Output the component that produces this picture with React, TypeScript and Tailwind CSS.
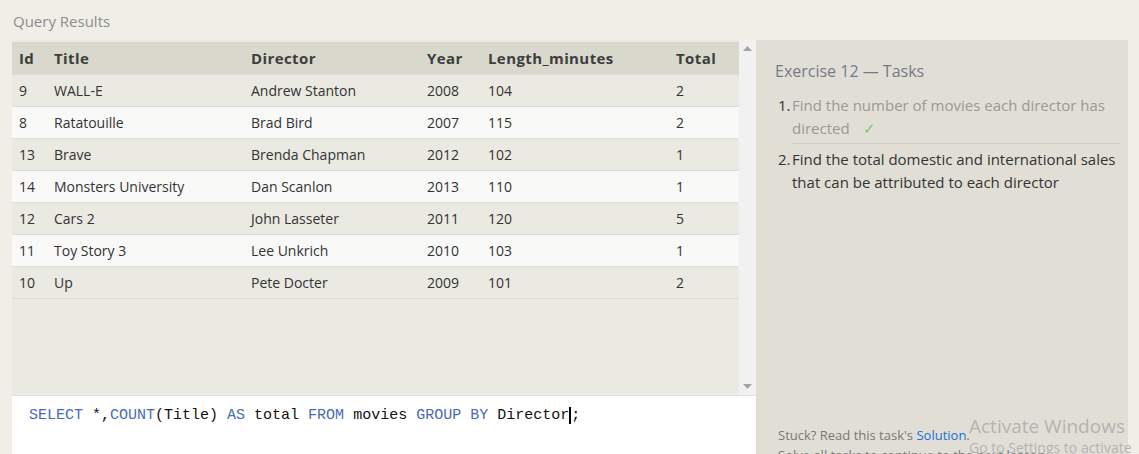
import React from 'react'

type Movie = { id: number; title: string; director: string; year: number; length: number; total: number }

const rows: Movie[] = [
  { id: 9, title: 'WALL-E', director: 'Andrew Stanton', year: 2008, length: 104, total: 2 },
  { id: 8, title: 'Ratatouille', director: 'Brad Bird', year: 2007, length: 115, total: 2 },
  { id: 13, title: 'Brave', director: 'Brenda Chapman', year: 2012, length: 102, total: 1 },
  { id: 14, title: 'Monsters University', director: 'Dan Scanlon', year: 2013, length: 110, total: 1 },
  { id: 12, title: 'Cars 2', director: 'John Lasseter', year: 2011, length: 120, total: 5 },
  { id: 11, title: 'Toy Story 3', director: 'Lee Unkrich', year: 2010, length: 103, total: 1 },
  { id: 10, title: 'Up', director: 'Pete Docter', year: 2009, length: 101, total: 2 },
]

// column widths, taken from the header positions
const cols = ['w-[42px] pl-[7px]', 'w-[197px]', 'w-[176px]', 'w-[61px]', 'w-[188px]', 'flex-1']

export default function App() {
  return (
    <div className="relative h-[454px] w-[1139px] overflow-hidden bg-[#f0eee7] font-['Open_Sans',sans-serif]">
      <div className="flex h-[40px] items-start pl-[13px] pt-[10px] text-[15px] text-[#8c8c8c]">Query Results</div>
      <div className="flex h-[414px] pl-[12px] pr-[11px]">
        {/* left: results + editor */}
        <div className="flex w-[744px] flex-col">
          <div className="flex h-[355px]">
            <div className="flex w-[727px] flex-col bg-[#eae9e2]">
              <div className="mt-[2px] flex h-[32px] items-center bg-[#d9d8cc] text-[15px] font-bold tracking-[0.4px] text-[#3d3d3d]">
                <div className={cols[0]}>Id</div>
                <div className={cols[1]}>Title</div>
                <div className={cols[2]}>Director</div>
                <div className={cols[3]}>Year</div>
                <div className={cols[4]}>Length_minutes</div>
                <div className={cols[5]}>Total</div>
              </div>
              {rows.map((r, i) => (
                <div
                  key={r.id}
                  className={`flex h-[32px] items-center border-t border-[#dcdcd6] text-[14px] text-[#333] ${
                    i % 2 === 1 ? 'bg-[#f9f9f8]' : 'bg-[#eae9e2]'
                  }`}
                >
                  <div className={cols[0]}>{r.id}</div>
                  <div className={cols[1]}>{r.title}</div>
                  <div className={cols[2]}>{r.director}</div>
                  <div className={cols[3]}>{r.year}</div>
                  <div className={cols[4]}>{r.length}</div>
                  <div className={cols[5]}>{r.total}</div>
                </div>
              ))}
              <div className="flex-1 border-t border-[#dcdcd6]" />
            </div>
            {/* scrollbar */}
            <div className="flex w-[17px] flex-col items-center justify-between bg-[#f1f1f1] py-[6px]">
              <svg width="9" height="5" viewBox="0 0 9 5"><path d="M0 5 L4.5 0 L9 5 Z" fill="#a3a3a3" /></svg>
              <svg width="9" height="5" viewBox="0 0 9 5"><path d="M0 0 L4.5 5 L9 0 Z" fill="#a3a3a3" /></svg>
            </div>
          </div>
          <div className="flex-1 border-t border-[#e2e2dc] bg-white pl-[17px] pt-[9px] font-['Liberation_Mono',monospace] text-[15px] text-[#111]">
            <span className="text-[#4a6ab8]">SELECT</span> *,<span className="text-[#4a6ab8]">COUNT</span>(Title){' '}
            <span className="text-[#4a6ab8]">AS</span> total <span className="text-[#4a6ab8]">FROM</span> movies{' '}
            <span className="text-[#4a6ab8]">GROUP BY</span> Director
            <span className="border-l-2 border-black">;</span>
          </div>
        </div>
        {/* right: tasks */}
        <div className="flex flex-1 flex-col bg-[#e1dfd5] pl-[19px] pr-[8px]">
          <div className="pt-[19px] text-[16px] text-[#747a86]">Exercise 12 — Tasks</div>
          <ol className="mt-[11px] pl-[3px] text-[15px] leading-[23px]">
            <li className="flex">
              <span className="w-[14px] shrink-0 text-[#333]">1.</span>
              <div className="flex-1 border-b border-[#d2d0c6] pb-[3px] text-[#999]">
                Find the number of movies each director has directed <span className="ml-[9px] text-[#7dc383]">✓</span>
              </div>
            </li>
            <li className="mt-[4px] flex">
              <span className="w-[14px] shrink-0 text-[#333]">2.</span>
              <div className="flex-1 text-[#333]">Find the total domestic and international sales that can be attributed to each director</div>
            </li>
          </ol>
          <div className="mt-auto pl-[3px] text-[13px] leading-[20px] text-[#777]">
            <div>
              Stuck? Read this task's <span className="text-[#1a6fd6]">Solution</span>.
            </div>
            <div className="h-[9px] overflow-hidden">Solve all tasks to continue to the next lesson.</div>
          </div>
        </div>
      </div>
      {/* OS watermark overlay */}
      <div className="pointer-events-none absolute left-[969px] top-[414px] font-['Open_Sans',sans-serif] text-[19px] leading-[24px] text-[#b3b3b3]">
        Activate Windows
        <div className="text-[14px] leading-[20px]">Go to Settings to activate Windows.</div>
      </div>
    </div>
  )
}
